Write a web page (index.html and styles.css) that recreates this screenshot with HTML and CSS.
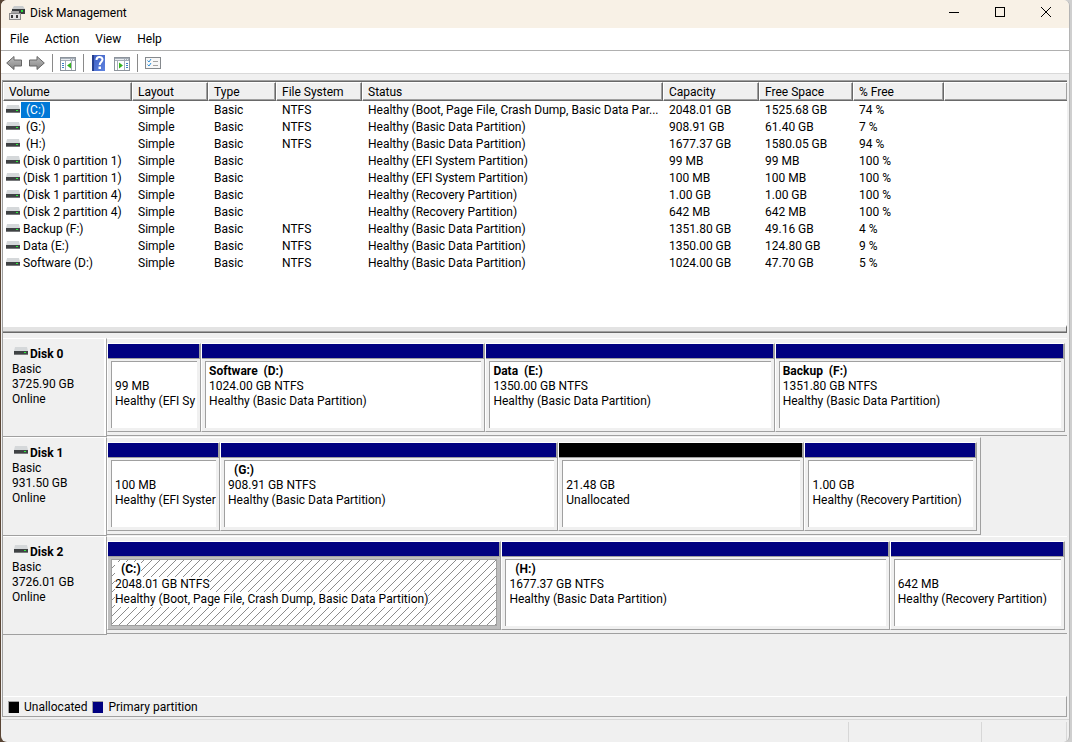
FILE: index.html
```
<!DOCTYPE html>
<html lang="en">
<head>
    <meta charset="UTF-8">
    <meta name="viewport" content="width=device-width, initial-scale=1.0">
    <title>Disk Management</title>
    <link rel="stylesheet" href="styles.css">
</head>
<body>
    <svg class="defs" aria-hidden="true">
        <linearGradient id="arrowFill" x1="0" y1="0" x2="0" y2="1">
            <stop offset="0" stop-color="#bdbdbd"/>
            <stop offset="1" stop-color="#858585"/>
        </linearGradient>
        <linearGradient id="helpFill" x1="0" y1="0" x2="1" y2="1">
            <stop offset="0" stop-color="#3c5cc0"/>
            <stop offset="1" stop-color="#5f84e0"/>
        </linearGradient>
        <symbol id="drive" viewBox="0 0 14 8">
            <path d="M1 0h12l1 4H0z" fill="#d5d8da"/>
            <rect y="4" width="14" height="4" fill="#3f4244"/>
            <rect y="7" width="14" height="1" fill="#77797b"/>
            <rect x="10" y="5" width="2" height="1" fill="#2bf03a"/>
        </symbol>
    </svg>
    <div class="window">
        <header class="titlebar">
            <svg class="app-icon" width="16" height="15" viewBox="0 0 16 15">
                <path d="M5 0h9l2 3H3z" fill="#c9cccd"/>
                <rect x="3" y="3" width="13" height="5" fill="#393c3e"/>
                <rect x="12" y="4" width="2" height="2" fill="#27dc38"/>
                <rect x="2" y="5" width="8" height="3" fill="#a6a6a6"/>
                <rect x="0.5" y="7.5" width="11" height="6" fill="#e4e4e4" stroke="#8b8b8b"/>
                <rect x="2" y="9" width="2" height="3" fill="#3a3a3a"/>
                <rect x="7" y="9" width="2" height="3" fill="#3a3a3a"/>
            </svg>
            <h1>Disk Management</h1>
            <div class="controls">
                <button type="button" aria-label="Minimize"><svg width="10" height="10" viewBox="0 0 10 10"><path d="M0 5.5h10"/></svg></button>
                <button type="button" aria-label="Maximize"><svg width="10" height="10" viewBox="0 0 10 10"><rect x="0.5" y="0.5" width="9" height="9"/></svg></button>
                <button type="button" aria-label="Close"><svg width="10" height="10" viewBox="0 0 10 10"><path d="M0 0l10 10M10 0L0 10"/></svg></button>
            </div>
        </header>
        <nav class="menubar">
            <button type="button">File</button>
            <button type="button">Action</button>
            <button type="button">View</button>
            <button type="button">Help</button>
        </nav>
        <div class="toolbar">
            <button type="button" aria-label="Back">
                <svg width="16" height="16" viewBox="0 0 16 16"><path d="M8 1.5V5h7.5v6H8v3.5L.7 8z" fill="url(#arrowFill)" stroke="#666"/></svg>
            </button>
            <button type="button" aria-label="Forward">
                <svg width="16" height="16" viewBox="0 0 16 16"><path d="M8 1.5V5H.5v6H8v3.5L15.3 8z" fill="url(#arrowFill)" stroke="#666"/></svg>
            </button>
            <span class="separator"></span>
            <button type="button" aria-label="Show console tree">
                <svg width="16" height="16" viewBox="0 0 16 16">
                    <rect x="0.5" y="2.5" width="15" height="13" fill="#fff" stroke="#8d949c"/>
                    <rect x="1" y="3" width="14" height="3" fill="#a6aeb8"/>
                    <path d="M1 4.5h9M11 4.5h1M13 4.5h1" stroke="#e8ecf0"/>
                    <path d="M5.5 6v9M11.5 6v9" stroke="#a6aeb8"/>
                    <path d="M2 8.5h2M2 10.5h2M2 12.5h2" stroke="#3f7fc4"/>
                    <path d="M11 7.5v6l-4-3z" fill="#35b41f"/>
                </svg>
            </button>
            <span class="separator"></span>
            <button type="button" aria-label="Help">
                <svg width="16" height="16" viewBox="0 0 16 16">
                    <rect x="1" width="13" height="16" fill="url(#helpFill)"/>
                    <rect x="1" width="2" height="16" fill="#263f8f"/>
                    <path d="M5.5 5c0-4 6-3.8 6-.5 0 2.5-2.8 2.5-2.8 5.5" fill="none" stroke="#fff" stroke-width="2"/>
                    <rect x="7.5" y="11.5" width="2.5" height="2.5" fill="#fff"/>
                </svg>
            </button>
            <button type="button" aria-label="Show action pane">
                <svg width="16" height="16" viewBox="0 0 16 16">
                    <rect x="0.5" y="2.5" width="15" height="13" fill="#fff" stroke="#8d949c"/>
                    <rect x="1" y="3" width="14" height="3" fill="#a6aeb8"/>
                    <path d="M1 4.5h9M11 4.5h1M13 4.5h1" stroke="#e8ecf0"/>
                    <path d="M3.5 6v9M10.5 6v9" stroke="#a6aeb8"/>
                    <path d="M12 8.5h2M12 10.5h2M12 12.5h2" stroke="#3f7fc4"/>
                    <path d="M5 7.5v6l4-3z" fill="#35b41f"/>
                </svg>
            </button>
            <span class="separator"></span>
            <button type="button" aria-label="Properties">
                <svg width="16" height="16" viewBox="0 0 16 16">
                    <rect x="0.5" y="2.5" width="15" height="11" fill="#f7f7f7" stroke="#85898d"/>
                    <path d="M2.5 5.5L4 7l2-3M2.5 9.5L4 11l2-3" fill="none" stroke="#2e8fd8"/>
                    <path d="M8 6.5h5M8 10.5h5" stroke="#a3a3a3"/>
                </svg>
            </button>
        </div>

        <main class="panes">
            <div class="volume-list">
                <table>
                    <colgroup>
                        <col class="col-volume"><col class="col-layout"><col class="col-type"><col class="col-fs"><col class="col-status"><col class="col-capacity"><col class="col-free"><col class="col-percent"><col>
                    </colgroup>
                    <thead>
                        <tr><th>Volume</th><th>Layout</th><th>Type</th><th>File System</th><th>Status</th><th>Capacity</th><th>Free Space</th><th>% Free</th><th></th></tr>
                    </thead>
                    <tbody>
                        <tr><td><svg class="drive"><use href="#drive"/></svg><span class="letter selected">(C:)</span></td><td>Simple</td><td>Basic</td><td>NTFS</td><td>Healthy (Boot, Page File, Crash Dump, Basic Data Par...</td><td>2048.01 GB</td><td>1525.68 GB</td><td>74 %</td><td></td></tr>
                        <tr><td><svg class="drive"><use href="#drive"/></svg><span class="letter">(G:)</span></td><td>Simple</td><td>Basic</td><td>NTFS</td><td>Healthy (Basic Data Partition)</td><td>908.91 GB</td><td>61.40 GB</td><td>7 %</td><td></td></tr>
                        <tr><td><svg class="drive"><use href="#drive"/></svg><span class="letter">(H:)</span></td><td>Simple</td><td>Basic</td><td>NTFS</td><td>Healthy (Basic Data Partition)</td><td>1677.37 GB</td><td>1580.05 GB</td><td>94 %</td><td></td></tr>
                        <tr><td><svg class="drive"><use href="#drive"/></svg><span>(Disk 0 partition 1)</span></td><td>Simple</td><td>Basic</td><td></td><td>Healthy (EFI System Partition)</td><td>99 MB</td><td>99 MB</td><td>100 %</td><td></td></tr>
                        <tr><td><svg class="drive"><use href="#drive"/></svg><span>(Disk 1 partition 1)</span></td><td>Simple</td><td>Basic</td><td></td><td>Healthy (EFI System Partition)</td><td>100 MB</td><td>100 MB</td><td>100 %</td><td></td></tr>
                        <tr><td><svg class="drive"><use href="#drive"/></svg><span>(Disk 1 partition 4)</span></td><td>Simple</td><td>Basic</td><td></td><td>Healthy (Recovery Partition)</td><td>1.00 GB</td><td>1.00 GB</td><td>100 %</td><td></td></tr>
                        <tr><td><svg class="drive"><use href="#drive"/></svg><span>(Disk 2 partition 4)</span></td><td>Simple</td><td>Basic</td><td></td><td>Healthy (Recovery Partition)</td><td>642 MB</td><td>642 MB</td><td>100 %</td><td></td></tr>
                        <tr><td><svg class="drive"><use href="#drive"/></svg><span>Backup (F:)</span></td><td>Simple</td><td>Basic</td><td>NTFS</td><td>Healthy (Basic Data Partition)</td><td>1351.80 GB</td><td>49.16 GB</td><td>4 %</td><td></td></tr>
                        <tr><td><svg class="drive"><use href="#drive"/></svg><span>Data (E:)</span></td><td>Simple</td><td>Basic</td><td>NTFS</td><td>Healthy (Basic Data Partition)</td><td>1350.00 GB</td><td>124.80 GB</td><td>9 %</td><td></td></tr>
                        <tr><td><svg class="drive"><use href="#drive"/></svg><span>Software (D:)</span></td><td>Simple</td><td>Basic</td><td>NTFS</td><td>Healthy (Basic Data Partition)</td><td>1024.00 GB</td><td>47.70 GB</td><td>5 %</td><td></td></tr>
                    </tbody>
                </table>
            </div>
            <div class="splitter"></div>

            <div class="disk-map">
                <section class="disk">
                    <div class="disk-info">
                        <h2><svg class="drive"><use href="#drive"/></svg>Disk 0</h2>
                        <p>Basic</p>
                        <p>3725.90 GB</p>
                        <p>Online</p>
                    </div>
                    <div class="partitions disk-0">
                        <div class="partition"><div class="details"><h3></h3><p>99 MB</p><p>Healthy (EFI Sy</p></div></div>
                        <div class="partition"><div class="details"><h3>Software&nbsp; (D:)</h3><p>1024.00 GB NTFS</p><p>Healthy (Basic Data Partition)</p></div></div>
                        <div class="partition"><div class="details"><h3>Data&nbsp; (E:)</h3><p>1350.00 GB NTFS</p><p>Healthy (Basic Data Partition)</p></div></div>
                        <div class="partition"><div class="details"><h3>Backup&nbsp; (F:)</h3><p>1351.80 GB NTFS</p><p>Healthy (Basic Data Partition)</p></div></div>
                    </div>
                </section>
                <section class="disk">
                    <div class="disk-info">
                        <h2><svg class="drive"><use href="#drive"/></svg>Disk 1</h2>
                        <p>Basic</p>
                        <p>931.50 GB</p>
                        <p>Online</p>
                    </div>
                    <div class="partitions disk-1">
                        <div class="partition"><div class="details"><h3></h3><p>100 MB</p><p>Healthy (EFI Syster</p></div></div>
                        <div class="partition"><div class="details"><h3>&nbsp; (G:)</h3><p>908.91 GB NTFS</p><p>Healthy (Basic Data Partition)</p></div></div>
                        <div class="partition unallocated"><div class="details"><h3></h3><p>21.48 GB</p><p>Unallocated</p></div></div>
                        <div class="partition"><div class="details"><h3></h3><p>1.00 GB</p><p>Healthy (Recovery Partition)</p></div></div>
                    </div>
                </section>
                <section class="disk">
                    <div class="disk-info">
                        <h2><svg class="drive"><use href="#drive"/></svg>Disk 2</h2>
                        <p>Basic</p>
                        <p>3726.01 GB</p>
                        <p>Online</p>
                    </div>
                    <div class="partitions disk-2">
                        <div class="partition active"><div class="details"><h3>&nbsp; (C:)</h3><p>2048.01 GB NTFS</p><p>Healthy (Boot, Page File, Crash Dump, Basic Data Partition)</p></div></div>
                        <div class="partition"><div class="details"><h3>&nbsp; (H:)</h3><p>1677.37 GB NTFS</p><p>Healthy (Basic Data Partition)</p></div></div>
                        <div class="partition"><div class="details"><h3></h3><p>642 MB</p><p>Healthy (Recovery Partition)</p></div></div>
                    </div>
                </section>
            </div>
            <div class="legend">
                <span class="swatch black"></span>Unallocated
                <span class="swatch navy"></span>Primary partition
            </div>
        </main>
        <footer class="statusbar"><span></span><span></span><span></span></footer>
    </div>
</body>
</html>
```
FILE: styles.css
```
* {
    box-sizing: border-box;
}
body {
    margin: 0;
    height: 100vh;
    padding: 0 2px 0 1px;
    background: linear-gradient(90deg, #5a4636 50%, #cfcfcf 50%);
    font-family: Roboto, "Open Sans", sans-serif;
    font-size: 12px;
    line-height: 15px;
    color: #000;
    overflow: hidden;
}
h1, h2, h3, p {
    margin: 0;
    font-size: 12px;
}
button {
    display: flex;
    align-items: center;
    justify-content: center;
    padding: 0;
    border: none;
    background: none;
    font: inherit;
    color: inherit;
}
.defs {
    position: absolute;
    width: 0;
    height: 0;
}
.window {
    display: flex;
    flex-direction: column;
    height: 100%;
    background: #f0f0f0;
    border-right: 1px solid #b4b4b4;
    border-radius: 6px;
    overflow: hidden;
}

/* Title bar */
.titlebar {
    display: flex;
    align-items: center;
    height: 28px;
    padding-left: 8px;
    padding-bottom: 2px;
    background: #f8f1e6;
}
.titlebar h1 {
    flex: 1;
    margin-left: 5px;
    font-weight: normal;
}
.controls {
    display: flex;
}
.controls button {
    width: 46px;
    height: 26px;
    padding-bottom: 2px;
}
.controls svg {
    fill: none;
    stroke: #000;
}

/* Menu and toolbar */
.menubar {
    display: flex;
    gap: 16px;
    height: 23px;
    padding-left: 9px;
    background: #fff;
    border-bottom: 1px solid #b0b0b0;
}
.toolbar {
    display: flex;
    align-items: center;
    gap: 7px;
    height: 23px;
    padding-top: 2px;
    padding-left: 5px;
    background: #fff;
    border-bottom: 1px solid #d9d9d9;
}
.separator {
    width: 1px;
    height: 18px;
    background: #8a8a8a;
}

/* Main area */
.panes {
    flex: 1;
    display: flex;
    flex-direction: column;
    margin: 6px 2px 2px 1px;
    border-left: 1px solid #a0a0a0;
    border-top: 1px solid #a0a0a0;
    border-bottom: 1px solid #a0a0a0;
}
.volume-list {
    height: 244px;
    background: #fff;
    border-top: 1px solid #696969;
    overflow: hidden;
}
table {
    width: 100%;
    table-layout: fixed;
    border-collapse: separate;
    border-spacing: 0;
}
.col-volume { width: 129px; }
.col-layout { width: 76px; }
.col-type { width: 68px; }
.col-fs { width: 86px; }
.col-status { width: 301px; }
.col-capacity { width: 96px; }
.col-free { width: 94px; }
.col-percent { width: 91px; }
th {
    height: 19px;
    padding: 1px 5px 0;
    background: #f0f0f0;
    border: 1px solid #696969;
    border-top-color: #fff;
    border-left-color: #fff;
    box-shadow: inset -1px -1px #a0a0a0;
    font-weight: normal;
    text-align: left;
}
th:last-child {
    border-right: none;
}
td {
    height: 17px;
    padding: 1px 0 0 6px;
    white-space: nowrap;
    overflow: hidden;
}
td:first-child {
    display: flex;
    align-items: center;
    gap: 3px;
    padding-top: 2px;
    padding-left: 3px;
}
.drive {
    width: 14px;
    height: 8px;
}
td .drive {
    margin-bottom: 3px;
}
.letter {
    height: 17px;
    margin-left: -2px;
    padding: 1px 5px;
}
.selected {
    background: #0078d7;
    color: #fff;
}
.splitter {
    height: 8px;
    margin-bottom: 5px;
    background: #e3e3e3;
    border-top: 2px solid #fff;
    border-right: 1px solid #696969;
    border-bottom: 1px solid #696969;
    box-shadow: inset 0 -1px #a0a0a0;
}

/* Disk map */
.disk-map {
    flex: 1;
}
.disk {
    display: grid;
    grid-template-columns: 104px 1fr;
    height: 99px;
}
.disk-info {
    padding: 8px 0 0 9px;
    border-top: 1px solid #fff;
    border-right: 1px solid #a0a0a0;
    border-bottom: 1px solid #a0a0a0;
    box-shadow: inset -2px 0 #fff;
}
.disk-info h2 {
    display: flex;
    gap: 2px;
    padding-left: 2px;
}
.partitions {
    display: grid;
    height: 98px;
    padding: 4px 2px 3px 0;
    border-top: 1px solid #fff;
    border-bottom: 1px solid #a0a0a0;
}
.disk-0 {
    grid-template-columns: 94fr 284fr 289fr 290fr;
}
.disk-1 {
    width: 91%;
    padding-right: 3px;
    grid-template-columns: 113fr 338fr 246fr 172fr;
    border-right: 1px solid #a0a0a0;
}
.disk-2 {
    grid-template-columns: 394fr 388fr 175fr;
}
.partition {
    display: flex;
    flex-direction: column;
    min-width: 0;
    padding: 0 3px 3px;
    border: 1px solid #a0a0a0;
    border-left-color: #fff;
    border-top-color: #fff;
    background: #f0f0f0;
}
.partition::before {
    content: "";
    height: 14px;
    margin: 0 -3px 2px;
    background: #000080;
    border-bottom: 1px solid #a0a0a0;
    border-right: 1px solid #a0a0a0;
}
.unallocated::before {
    background: #000;
}
.details {
    flex: 1;
    padding: 2px 0 0 3px;
    background: #fff;
    border-left: 1px solid #a0a0a0;
    border-top: 1px solid #a0a0a0;
    white-space: nowrap;
    overflow: hidden;
}
.details h3 {
    height: 15px;
}
.active {
    background: #bdbdbd;
}
.active .details {
    border: 1px solid #a0a0a0;
    background: linear-gradient(135deg, #fff 46%, #8c8c8c 46%, #8c8c8c 54%, #fff 54%) 0 0 / 8px 8px;
}
.active h3,
.active p {
    width: fit-content;
    background: #fff;
}

/* Legend and status bar */
.legend {
    display: flex;
    align-items: center;
    gap: 5px;
    height: 20px;
    padding-top: 1px;
    padding-left: 5px;
    border-top: 1px solid #fff;
    border-right: 1px solid #a0a0a0;
}
.swatch {
    width: 11px;
    height: 12px;
    border-top: 1px solid #a0a0a0;
    border-left: 1px solid #a0a0a0;
}
.black { background: #000; }
.navy { background: #000080; }
.statusbar {
    display: grid;
    grid-template-columns: 1fr 133px 85px;
    height: 23px;
    padding: 2px 2px 0 0;
    border-top: 1px solid #d7d7d7;
}
.statusbar span {
    border-right: 1px solid #d7d7d7;
}
```
